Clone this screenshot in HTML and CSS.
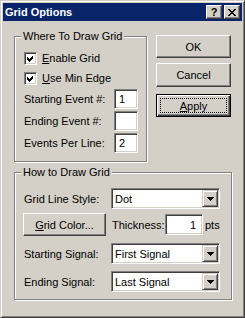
FILE: index.html
```html
<!DOCTYPE html>
<html>
<head>
  <link rel="stylesheet" href="styles.css">
</head>
<body>
  <div class="window">
    <div class="titlebar">
      <span class="title">Grid Options</span>
      <div class="caption-buttons">
        <span class="caption-btn help">?</span>
        <span class="caption-btn close">
          <svg width="8" height="7" viewBox="0 0 8 7"><path d="M0 0h2l2 2.4 2-2.4h2l-3 3.5 3 3.5h-2l-2-2.4-2 2.4h-2l3-3.5z"/></svg>
        </span>
      </div>
    </div>

    <div class="dialog">
      <div class="top-row">
        <div class="group group-where">
          <span class="group-label">Where To Draw Grid</span>

          <div class="check-row">
            <span class="checkbox">
              <svg width="9" height="9" viewBox="0 0 9 9"><path d="M1 3l2 2 4-4v3l-4 4-2-2z"/></svg>
            </span>
            <span class="check-label"><u>E</u>nable Grid</span>
          </div>
          <div class="check-row">
            <span class="checkbox">
              <svg width="9" height="9" viewBox="0 0 9 9"><path d="M1 3l2 2 4-4v3l-4 4-2-2z"/></svg>
            </span>
            <span class="check-label"><u>U</u>se Min Edge</span>
          </div>

          <div class="field-row first">
            <span class="field-label">Starting Event #:</span>
            <span class="textbox small">1</span>
          </div>
          <div class="field-row">
            <span class="field-label">Ending Event #:</span>
            <span class="textbox small"></span>
          </div>
          <div class="field-row">
            <span class="field-label">Events Per Line:</span>
            <span class="textbox small">2</span>
          </div>
        </div>

        <div class="button-col">
          <span class="button">OK</span>
          <span class="button cancel">Cancel</span>
          <span class="button default apply"><span class="focus-rect"><u>A</u>pply</span></span>
        </div>
      </div>

      <div class="group group-how">
        <span class="group-label">How to Draw Grid</span>

        <div class="select-row">
          <span class="select-label">Grid Line Style:</span>
          <div class="select">
            <span class="select-text">Dot</span>
            <span class="select-arrow"><svg width="7" height="4" viewBox="0 0 7 4"><path d="M0 0h7l-3.5 4z"/></svg></span>
          </div>
        </div>

        <div class="color-row">
          <span class="button color-btn"><u>G</u>rid Color...</span>
          <span class="thickness-label">Thickness:</span>
          <span class="textbox thickness">1</span>
          <span class="unit">pts</span>
        </div>

        <div class="select-row spaced">
          <span class="select-label">Starting Signal:</span>
          <div class="select">
            <span class="select-text">First Signal</span>
            <span class="select-arrow"><svg width="7" height="4" viewBox="0 0 7 4"><path d="M0 0h7l-3.5 4z"/></svg></span>
          </div>
        </div>

        <div class="select-row spaced">
          <span class="select-label">Ending Signal:</span>
          <div class="select">
            <span class="select-text">Last Signal</span>
            <span class="select-arrow"><svg width="7" height="4" viewBox="0 0 7 4"><path d="M0 0h7l-3.5 4z"/></svg></span>
          </div>
        </div>
      </div>
    </div>
  </div>
</body>
</html>
```

FILE: styles.css
```css
:root {
  --face: #d4d0c8;
  --shadow: #808080;
  --dark-shadow: #404040;
  --highlight: #ffffff;
  --caption: #0a246a;
}

body {
  margin: 0;
  font-family: "Liberation Sans", Arial, sans-serif;
  font-size: 11px;
  color: #000;
  background: var(--face);
}

.window {
  width: 245px;
  height: 318px;
  box-sizing: border-box;
  padding: 2px;
  border: 1px solid;
  border-color: var(--face) var(--dark-shadow) var(--dark-shadow) var(--face);
  box-shadow: inset 1px 1px 0 var(--highlight), inset -1px -1px 0 var(--shadow);
  background: var(--face);
}

.titlebar {
  height: 18px;
  background: var(--caption);
  display: flex;
  align-items: center;
  justify-content: space-between;
  padding: 0 2px;
}

.title {
  color: white;
  font-weight: bold;
  font-size: 11px;
}

.caption-buttons {
  display: flex;
  gap: 2px;
}

.caption-btn {
  width: 16px;
  height: 14px;
  box-sizing: border-box;
  background: var(--face);
  border: 1px solid;
  border-color: var(--highlight) var(--dark-shadow) var(--dark-shadow) var(--highlight);
  box-shadow: inset -1px -1px 0 var(--shadow);
  display: flex;
  align-items: center;
  justify-content: center;
  font-weight: bold;
  font-size: 11px;
  line-height: 1;
}

.caption-btn svg {
  display: block;
  shape-rendering: crispEdges;
}

.dialog {
  padding: 14px 0 0 11px;
}

.top-row {
  display: flex;
  align-items: flex-start;
}

/* etched group box */
.group {
  position: relative;
  box-sizing: border-box;
  border: 1px solid var(--shadow);
  box-shadow: 1px 1px 0 var(--highlight), inset 1px 1px 0 var(--highlight);
}

.group-label {
  position: absolute;
  top: -7px;
  left: 6px;
  padding: 0 2px;
  line-height: 13px;
  background: var(--face);
}

.group-where {
  width: 133px;
  height: 126px;
  margin-top: 1px;
  padding: 11px 0 0 9px;
}

.check-row {
  display: flex;
  align-items: center;
  height: 20px;
}

.checkbox {
  width: 13px;
  height: 13px;
  box-sizing: border-box;
  background: white;
  border: 1px solid;
  border-color: var(--shadow) var(--highlight) var(--highlight) var(--shadow);
  box-shadow: inset 1px 1px 0 var(--dark-shadow), inset -1px -1px 0 var(--face);
  padding: 1px;
}

.checkbox svg {
  display: block;
  shape-rendering: crispEdges;
}

.check-label {
  margin-left: 5px;
}

.field-row {
  display: flex;
  align-items: center;
  height: 20px;
  margin-top: 2px;
}

.field-row.first {
  margin-top: 1px;
}

.field-label {
  width: 90px;
}

.textbox {
  box-sizing: border-box;
  height: 20px;
  background: white;
  border: 1px solid;
  border-color: var(--shadow) var(--highlight) var(--highlight) var(--shadow);
  box-shadow: inset 1px 1px 0 var(--dark-shadow), inset -1px -1px 0 var(--face);
  padding: 0 3px 0 4px;
  display: flex;
  align-items: center;
}

.textbox.small {
  width: 24px;
}

.textbox.thickness {
  width: 38px;
  height: 21px;
  justify-content: flex-end;
  padding-right: 6px;
}

.button-col {
  display: flex;
  flex-direction: column;
  margin-left: 9px;
}

.button {
  box-sizing: border-box;
  width: 75px;
  height: 23px;
  background: var(--face);
  border: 1px solid;
  border-color: var(--highlight) var(--dark-shadow) var(--dark-shadow) var(--highlight);
  box-shadow: inset -1px -1px 0 var(--shadow);
  display: flex;
  align-items: center;
  justify-content: center;
}

.button.cancel {
  margin-top: 5px;
  height: 24px;
}

.button.apply {
  margin-top: 7px;
}

.button.default {
  border-color: #000;
  box-shadow: inset 1px 1px 0 var(--highlight), inset -1px -1px 0 var(--dark-shadow), inset -2px -2px 0 var(--shadow);
  padding: 3px;
}

.focus-rect {
  flex: 1;
  align-self: stretch;
  border: 1px dotted #000;
  display: flex;
  align-items: center;
  justify-content: center;
}

.group-how {
  width: 218px;
  height: 128px;
  margin-top: 10px;
  padding: 15px 0 0 9px;
}

.select-row {
  display: flex;
  align-items: center;
}

.select-row.spaced {
  margin-top: 7px;
}

.select-label {
  width: 87px;
}

.select {
  box-sizing: border-box;
  width: 109px;
  height: 21px;
  background: white;
  border: 1px solid;
  border-color: var(--shadow) var(--highlight) var(--highlight) var(--shadow);
  box-shadow: inset 1px 1px 0 var(--dark-shadow), inset -1px -1px 0 var(--face);
  padding: 1px;
  display: flex;
  align-items: stretch;
}

.select-text {
  flex: 1;
  display: flex;
  align-items: center;
  padding-left: 2px;
}

.select-arrow {
  width: 16px;
  box-sizing: border-box;
  background: var(--face);
  border: 1px solid;
  border-color: var(--face) var(--dark-shadow) var(--dark-shadow) var(--face);
  box-shadow: inset 1px 1px 0 var(--highlight), inset -1px -1px 0 var(--shadow);
  display: flex;
  align-items: center;
  justify-content: center;
}

.select-arrow svg {
  display: block;
  shape-rendering: crispEdges;
}

.color-row {
  display: flex;
  align-items: center;
  margin-top: 4px;
}

.button.color-btn {
  width: 83px;
  margin-left: -1px;
}

.thickness-label {
  width: 53px;
  margin-left: 6px;
}

.unit {
  margin-left: 2px;
}
```
